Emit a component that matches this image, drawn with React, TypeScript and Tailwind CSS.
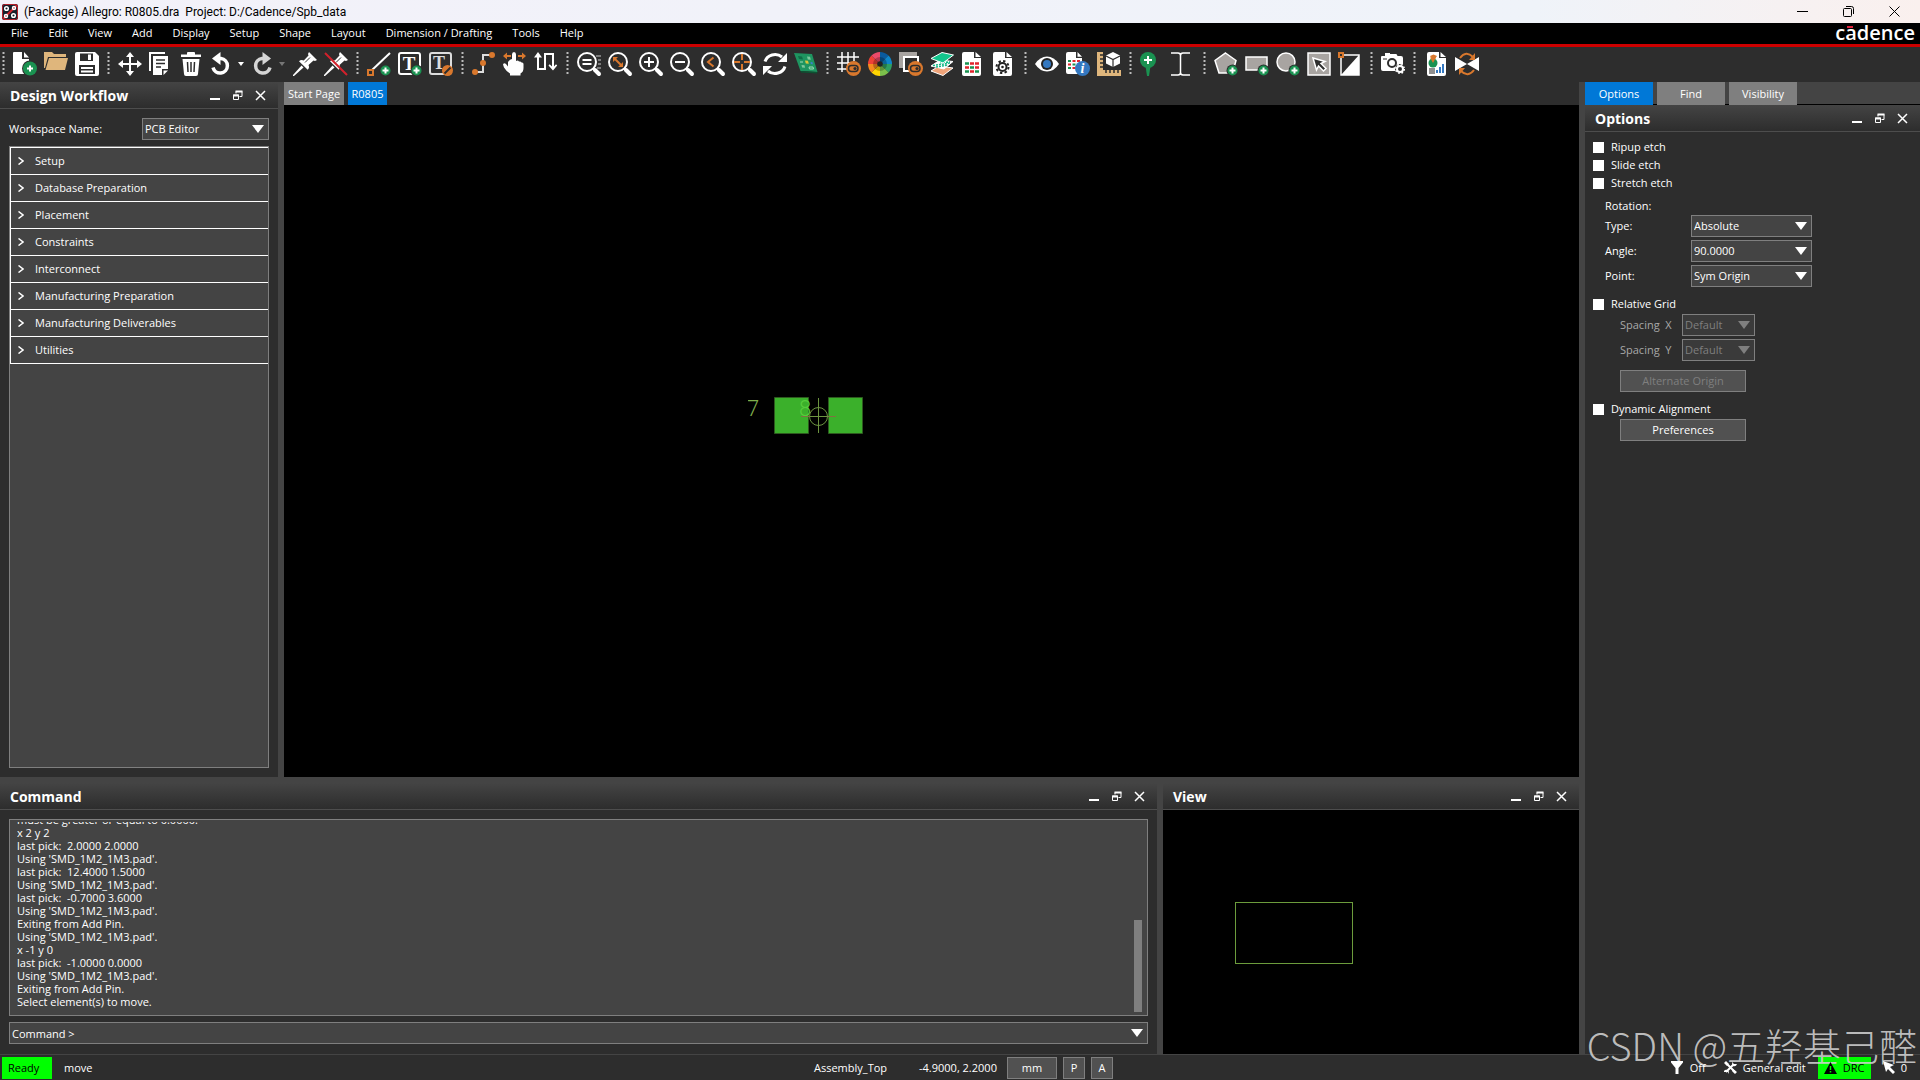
import type { ReactNode } from 'react';
import clsx from 'clsx';

const menus = ['File', 'Edit', 'View', 'Add', 'Display', 'Setup', 'Shape', 'Layout', 'Dimension / Drafting', 'Tools', 'Help'];

const workflow = [
  'Setup',
  'Database Preparation',
  'Placement',
  'Constraints',
  'Interconnect',
  'Manufacturing Preparation',
  'Manufacturing Deliverables',
  'Utilities',
];

const log = [
  'must be greater or equal to 0.0000.',
  'x 2 y 2',
  'last pick:  2.0000 2.0000',
  "Using 'SMD_1M2_1M3.pad'.",
  'last pick:  12.4000 1.5000',
  "Using 'SMD_1M2_1M3.pad'.",
  'last pick:  -0.7000 3.6000',
  "Using 'SMD_1M2_1M3.pad'.",
  'Exiting from Add Pin.',
  "Using 'SMD_1M2_1M3.pad'.",
  'x -1 y 0',
  'last pick:  -1.0000 0.0000',
  "Using 'SMD_1M2_1M3.pad'.",
  'Exiting from Add Pin.',
  'Select element(s) to move.',
];

const ORANGE = '#d9782d';
const GREEN = '#1a9251';

function Plus({ x, y, r = 5 }: { x: number; y: number; r?: number }) {
  return (
    <g>
      <circle cx={x} cy={y} r={r + 1} fill="#2d2d2d" />
      <circle cx={x} cy={y} r={r} fill={GREEN} />
      <path d={`M${x - 3} ${y}h6M${x} ${y - 3}v6`} stroke="#fff" strokeWidth="2" />
    </g>
  );
}

function Toggle({ x, y }: { x: number; y: number }) {
  return (
    <g>
      <circle cx={x} cy={y} r="7.5" fill={ORANGE} />
      <rect x={x - 5} y={y - 3} width="9.5" height="6" rx="3" fill="none" stroke="#2d2d2d" strokeWidth="1.5" />
      <circle cx={x + 1.5} cy={y} r="1.6" fill="#2d2d2d" />
    </g>
  );
}

function Lens({ children }: { children: ReactNode }) {
  return (
    <g>
      <circle cx="10" cy="10" r="9" fill="none" stroke="#fff" strokeWidth="2" />
      <path d="M16 16l2 2" stroke="#fff" strokeWidth="2.5" />
      <path d="M18 18l4 4" stroke="#fff" strokeWidth="4" strokeLinecap="round" />
      {children}
    </g>
  );
}

const wheel = ['#0a5a9d', '#0f86c9', '#2f9f62', '#7cc04b', '#ffd400', '#f58a1f', '#ee4036', '#ec4a6a'];

function Wheel() {
  const at = (i: number, r: number) => {
    const a = (i * Math.PI) / 4;
    return `${12 + r * Math.sin(a)} ${12 - r * Math.cos(a)}`;
  };
  return (
    <g>
      {wheel.map((c, i) => (
        <path key={c} d={`M12 12L${at(i, 12)}A12 12 0 0 1 ${at(i + 1, 12)}z`} fill={c} />
      ))}
      <circle cx="12" cy="12" r="7" fill="#000" opacity=".25" />
      <circle cx="12" cy="12" r="2.8" fill="#222" />
    </g>
  );
}

const pin = (
  <g fill="#fff">
    <path d="M16 0l8 8-2 1-1.500-.5-5 4.500c1 2 .5 3.500-.8 4.800L6 9.300C7.300 8 8.800 7.500 10.800 8.500l4.700-5L15 2z" />
    <path d="M8.500 13.500l2 2L1 24H0v-1z" />
    <path d="M12 10.500l5-5" stroke="#2d2d2d" strokeWidth="1" />
  </g>
);

const undo = (
  <g>
    <path d="M6 6.500h4a7.300 7.300 0 1 1-8 9" fill="none" stroke="#fff" strokeWidth="3.500" />
    <path d="M9.500 0v13L1 6.500z" fill="#fff" />
  </g>
);

const page = <path d="M1 2q0-2 2-2h10v6h7v16q0 2-2 2H3q-2 0-2-2zM14.500 0l5.500 5h-5.500z" fill="#fff" />;

const icons: Record<string, ReactNode> = {
  'New': (
    <g>
      <path d="M0 1q0-1 1-1h8v7h7v15H1q-1 0-1-1zM11 0l5 5.500h-5z" fill="#fff" />
      <Plus x={17} y={16.500} r={7} />
    </g>
  ),
  'Open': (
    <g>
      <path d="M0 0h8l2 2h12v3H4L1 16H0z" fill="#dfb67c" />
      <path d="M5 6h19l-3 12H1.500z" fill="#dfb67c" />
    </g>
  ),
  'Save': (
    <g>
      <path d="M0 2q0-2 2-2h18l4 4v18q0 2-2 2H2q-2 0-2-2z" fill="#fff" />
      <path d="M5 1.500h13V9H5zM4 13h16v9H4z" fill="#2d2d2d" />
      <path d="M13 2.500h3V8h-3zM6 15h12v2H6zM6 18.500h12v2H6z" fill="#fff" />
    </g>
  ),
  'Move': (
    <path d="M12 0l4 5h-3v6h6V8l5 4-5 4v-3h-6v6h3l-4 5-4-5h3v-6H5v3l-5-4 5-4v3h6V5H8z" fill="#fff" />
  ),
  'Copy': (
    <g>
      <path d="M0 0h16v2H2v17H0z" fill="#fff" />
      <path d="M4 4h15v13h-6v6H4z" fill="#fff" />
      <path d="M14.500 18.500H19l-4.500 4.500z" fill="#fff" />
      <path d="M7 8h9M7 11.500h9M7 15h5" stroke="#2d2d2d" strokeWidth="1.500" />
    </g>
  ),
  'Delete': (
    <g transform="translate(-1 0)">
      <path d="M2 2.500h6V1q0-1 1-1h6q1 0 1 1v1.500h6V5H2zM3.500 7h17L19 22q0 2-2 2H7q-2 0-2-2z" fill="#fff" />
      <path d="M8.500 10l.5 10M12 10v10M15.500 10l-.5 10" stroke="#2d2d2d" strokeWidth="1.500" />
    </g>
  ),
  'Undo': undo,
  'Redo': (
    <g transform="matrix(-1 0 0 1 20 0)" opacity=".8">
      {undo}
    </g>
  ),
  'Fix': pin,
  'Unfix': (
    <g>
      {pin}
      <path d="M1 1l22 22" stroke="#d3202b" strokeWidth="2" />
    </g>
  ),
  'Add Line': (
    <g>
      <path d="M4 19L23 1" stroke="#fff" strokeWidth="2" />
      <rect x="1" y="18" width="5" height="5" fill="#2d2d2d" stroke={ORANGE} strokeWidth="2" />
      <Plus x={18.500} y={18.500} />
    </g>
  ),
  'Add Text': (
    <g>
      <rect x="1" y="1" width="21" height="21" rx="2" fill="none" stroke="#fff" strokeWidth="2" />
      <text x="11" y="18" fontSize="19" textAnchor="middle" fill="#fff" fontFamily="Liberation Serif" fontWeight="700">T</text>
      <Plus x={18.500} y={18.500} />
    </g>
  ),
  'Edit Text': (
    <g>
      <rect x="1" y="1" width="21" height="21" rx="2" fill="none" stroke="#ddd" strokeWidth="2" />
      <text x="10" y="17" fontSize="18" textAnchor="middle" fill="#ddd" fontFamily="Liberation Serif" fontWeight="700">T</text>
      <circle cx="18.500" cy="18.500" r="5.500" fill={ORANGE} />
      <path d="M15.500 21.500l6-6" stroke="#2d2d2d" strokeWidth="2" />
    </g>
  ),
  'Add Connect': (
    <g>
      <path d="M3 20h8v-9M11 11V3h9" fill="none" stroke="#ddd" strokeWidth="2" />
      <circle cx="3" cy="20" r="3" fill={ORANGE} />
      <circle cx="11" cy="11" r="3" fill={ORANGE} />
      <circle cx="20" cy="3" r="3" fill={ORANGE} />
    </g>
  ),
  'Slide': (
    <g>
      <path d="M0 4l4-3.500V3h4v2H4v2.500zM23 4l-4-3.500V3h-4v2h4v2.500z" fill={ORANGE} />
      <path d="M9 2.500Q9 0 11 0t2 2.500V9q2-1 3 .5 1.800-.5 2.500 1 2-.3 2 1.500v4q0 4-3 5.500v2H7v-2Q3 19 1 15.500L0 12.500Q1 10.500 3 12l2 2.500V10q2-3 4-3z" fill="#fff" />
    </g>
  ),
  'Delay Tune': (
    <g fill="#fff">
      <path d="M3 5v13h9V3h6v14h2V1H10v15H5V5z" />
      <path d="M4 0l4 5.500H0zM19 18.500l-4.500-5 1.200-1.200L19 15.500l3-3.200 1.200 1.200z" />
    </g>
  ),
  'Zoom Points': (
    <Lens>
      <path d="M5.500 8h9M5.500 12h9" stroke="#fff" strokeWidth="2" />
      <path d="M19 4h5M21 8h3M21 12h3M20 16h4" stroke="#ccc" strokeWidth="1" />
    </Lens>
  ),
  'Zoom Fit': (
    <Lens>
      <path d="M7 7l6 6" stroke={ORANGE} strokeWidth="2" />
      <path d="M5 5h5l-5 5zM15 15h-5l5-5z" fill={ORANGE} />
    </Lens>
  ),
  'Zoom In': (
    <Lens>
      <path d="M5 10h10M10 5v10" stroke="#fff" strokeWidth="2" />
    </Lens>
  ),
  'Zoom Out': (
    <Lens>
      <path d="M5 10h10" stroke="#fff" strokeWidth="2" />
    </Lens>
  ),
  'Zoom Previous': (
    <Lens>
      <path d="M12.500 5.500L7 10l5.500 4.500" fill="none" stroke={ORANGE} strokeWidth="2" />
    </Lens>
  ),
  'Zoom Center': (
    <Lens>
      <path d="M2 10h6M12 10h6M10 2v6M10 12v6" stroke={ORANGE} strokeWidth="2" />
    </Lens>
  ),
  'Refresh': (
    <g>
      <path d="M2 9.500C4 3 13 0 19 5M22 14.500C20 21 11 24 5 19" fill="none" stroke="#fff" strokeWidth="3" />
      <path d="M24 1v9h-9zM0 23v-9h9z" fill="#fff" />
    </g>
  ),
  '3D View': (
    <g>
      <path d="M0 1l18 1 5.500 18-17-1z" fill="#1e9560" />
      <path d="M6.500 19l17 1-.5 1.500-16-1z" fill="#0d5132" />
      <path d="M4 4l4 .5 1 3-4-.5z" fill="#0f6e47" />
      <path d="M13 4.500l3 .2.8 3-3-.2zM7.500 13l3 .2.600 2.600-3-.2z" fill="#7cc99c" />
      <path d="M11 8.500l3 .2.8 3-3-.2z" fill="#d8c53a" />
      <path d="M16.500 10l2 .2.400 2-2-.2z" fill="#3f7fd0" />
      <path d="M15 15h4l.5 2h-4zM6 10h3" stroke="#9fdcb8" fill="none" />
    </g>
  ),
  'Grid Toggle': (
    <g>
      <path d="M5 0v20M11 0v20M17 0v9M0 5h22M0 11h13M0 17h10" stroke="#fff" strokeWidth="1.500" />
      <Toggle x={16.500} y={16.500} />
    </g>
  ),
  'Color': <Wheel />,
  'Shadow Toggle': (
    <g>
      <path d="M0 0h18v4H4v12H0z" fill="#a8a4a1" />
      <path d="M5 5h14v5M5 4v15h5" fill="none" stroke="#fff" strokeWidth="2" />
      <Toggle x={16.500} y={16.500} />
    </g>
  ),
  'Cross Section': (
    <g stroke="#fff" strokeWidth="1" strokeLinejoin="round">
      <path d="M1 19l8-5 14 2-10 7.500z" fill="#f0a47a" />
      <path d="M1 14l9-6 13 1.500-9 7.500z" fill="#fff" />
      <path d="M3 13.500l17-2.500M6 15l12-2M10 10.500l10-.5" stroke="#12b886" strokeWidth="1.500" strokeDasharray="2 1" />
      <path d="M1 6.500L12 .5 23.500 3 13 11z" fill="#13c58c" />
    </g>
  ),
  'Constraints': (
    <g>
      {page}
      <path d="M4 11.500h4M4 19.500h4M9 15.500h4" stroke={GREEN} strokeWidth="2.500" />
      <path d="M9 11.500h4M14 11.500h4M4 15.500h4M14 15.500h4M9 19.500h4" stroke="#e0252c" strokeWidth="2.500" />
      <path d="M14 19.500h4" stroke={GREEN} strokeWidth="2.500" />
    </g>
  ),
  'Parameters': (
    <g>
      {page}
      <circle cx="10.500" cy="15" r="4" fill="none" stroke="#222" strokeWidth="2" />
      <circle cx="10.500" cy="15" r="1.300" fill="#222" />
      <circle cx="10.500" cy="15" r="6" fill="none" stroke="#222" strokeWidth="2" strokeDasharray="2.350 2.350" />
    </g>
  ),
  'Visibility': (
    <g>
      <path d="M0 12q5-7.500 12-7.500T24 12q-5 7.500-12 7.500T0 12z" fill="#fff" />
      <circle cx="12" cy="12" r="6" fill="#222" />
      <circle cx="12" cy="12" r="4" fill="#3478c0" />
    </g>
  ),
  'Show Element': (
    <g>
      <path d="M0 2q0-2 2-2h8v6h6v16H2q-2 0-2-2zM11.500 0l4.500 4.800h-4.500z" fill="#fff" />
      <path d="M2 9h3M6.500 12.500h3M2 16h3" stroke={GREEN} strokeWidth="2" />
      <path d="M6.500 9h3M2 12.500h3M6.500 16h3M11 9h3" stroke="#e0252c" strokeWidth="2" />
      <circle cx="16.500" cy="16.500" r="7.500" fill="#3478c0" />
      <text x="16.500" y="21" fontSize="14" textAnchor="middle" fill="#fff" fontFamily="Liberation Serif" fontWeight="700" fontStyle="italic">i</text>
    </g>
  ),
  'Measure': (
    <g>
      <path d="M0 0h6v18h18v6H0z" fill="#dfb67c" />
      <path d="M3 3h3M3 7h3M3 11h3M3 15h3M9 18v3M13 18v3M17 18v3M21 18v3" stroke="#2d2d2d" strokeWidth="1.500" />
      <path d="M16 0l7 3.500v8L16 15l-7-3.500v-8z" fill="#fff" />
      <path d="M9 4l7 3.500L23 4M16 7.500V15" fill="none" stroke="#2d2d2d" strokeWidth="1.200" />
    </g>
  ),
  'Add Pin': (
    <g>
      <circle cx="8" cy="8" r="8" fill={GREEN} />
      <path d="M5.500 14h5L9 24H7z" fill={GREEN} />
      <path d="M4 8h8M8 4v8" stroke="#fff" strokeWidth="2" />
    </g>
  ),
  'Text Cursor': (
    <g fill="none" stroke="#fff">
      <path d="M0 1h7q2.500 0 2.500 2.500v17q0 2.500-2.500 2.500H0M19 1h-7q-2.500 0-2.500 2.500v17q0 2.500 2.500 2.500h7" strokeWidth="1.500" />
    </g>
  ),
  'Add Polygon': (
    <g>
      <path d="M11.500 1L22 8.500 18.500 21H5L1 8.500z" fill="#a8a4a1" stroke="#fff" strokeWidth="1.500" />
      <Plus x={18.500} y={18.500} />
    </g>
  ),
  'Add Rectangle': (
    <g>
      <rect x="1" y="5" width="21" height="13" fill="#a8a4a1" stroke="#fff" strokeWidth="1.500" />
      <Plus x={18.500} y={18.500} />
    </g>
  ),
  'Add Circle': (
    <g>
      <circle cx="10" cy="10" r="9" fill="#a8a4a1" stroke="#fff" strokeWidth="1.500" />
      <Plus x={18.500} y={18.500} />
    </g>
  ),
  'Select Shape': (
    <g>
      <rect x="1" y="1" width="22" height="22" fill="#a8a4a1" stroke="#fff" strokeWidth="1.500" />
      <path d="M6 6l12 3.500-4 2 5 5-2.500 2.500-5-5-2 4z" fill="#2d2d2d" stroke="#fff" strokeWidth="1.500" />
    </g>
  ),
  'Void Shape': (
    <g>
      <rect x="3" y="3" width="18" height="20" fill="none" stroke="#fff" strokeWidth="1.500" />
      <path d="M21 3v20H3z" fill="#fff" />
      <rect x="1" y="1" width="4" height="4" fill="#2d2d2d" stroke={ORANGE} strokeWidth="2" />
    </g>
  ),
  'Snapshot': (
    <g>
      <path d="M1 4h3V1h5v1h6q1 0 1.500 2H20q2 0 2 2v13H2q-2 0-2-2V5q0-1 1-1z" fill="#fff" />
      <path d="M2 7h4" stroke="#2d2d2d" />
      <circle cx="11" cy="11" r="4" fill="none" stroke="#2d2d2d" strokeWidth="2" />
      <circle cx="19" cy="17" r="5" fill="#2d2d2d" />
      <circle cx="19" cy="17" r="3" fill="none" stroke="#fff" strokeWidth="2" />
      <circle cx="19" cy="17" r="4.300" fill="none" stroke="#fff" strokeWidth="1.500" strokeDasharray="1.700 1.700" />
    </g>
  ),
  'Reports': (
    <g transform="translate(2 0)">
      {page}
      <path d="M4 4l3.500-1.500L11 4 7.500 9z" fill={ORANGE} />
      <circle cx="7" cy="11" r="4.500" fill={GREEN} />
      <path d="M7 11L4 5.500h6z" fill={ORANGE} />
      <rect x="3" y="16" width="6" height="6" fill="#8f8f8f" />
      <path d="M11 21v-3M14 21v-6M17 21v-9" stroke="#3478c0" strokeWidth="2" />
    </g>
  ),
  'Flip Design': (
    <g>
      <path d="M0 5l12 7-12 7zM24 5l-12 7 12 7z" fill="#fff" />
      <path d="M5 6q6-8 13-1M19 18q-6 8-13 1" fill="none" stroke={ORANGE} strokeWidth="2" />
      <path d="M20 1v7h-6zM4 23v-7h6z" fill={ORANGE} />
    </g>
  ),
};

const toolGroups = [
  ['New', 'Open', 'Save'],
  ['Move', 'Copy', 'Delete', 'Undo', 'Redo', 'Fix', 'Unfix'],
  ['Add Line', 'Add Text', 'Edit Text'],
  ['Add Connect', 'Slide', 'Delay Tune'],
  ['Zoom Points', 'Zoom Fit', 'Zoom In', 'Zoom Out', 'Zoom Previous', 'Zoom Center', 'Refresh', '3D View'],
  ['Grid Toggle', 'Color', 'Shadow Toggle', 'Cross Section', 'Constraints', 'Parameters'],
  ['Visibility', 'Show Element', 'Measure'],
  ['Add Pin', 'Text Cursor'],
  ['Add Polygon', 'Add Rectangle', 'Add Circle', 'Select Shape', 'Void Shape'],
  ['Snapshot'],
  ['Reports', 'Flip Design'],
];

function Tool({ name }: { name: string }) {
  const hasMenu = name === 'Undo' || name === 'Redo';
  return (
    <button type="button" aria-label={name} className="flex items-center">
      <svg viewBox="0 0 24 24" className="h-6 w-6 overflow-visible">
        {icons[name]}
      </svg>
      {hasMenu && (
        <svg viewBox="0 0 10 6" className="h-[6px] w-[10px]">
          <path d="M3 1h6L6 5z" fill={name === 'Undo' ? '#fff' : '#777'} />
        </svg>
      )}
    </button>
  );
}

function Toolbar() {
  return (
    <div className="flex h-[35px] shrink-0 items-start bg-[#2d2d2d] pt-[5px] pl-[2px]">
      {toolGroups.map((group, i) => (
        <div key={group[0]} className="flex items-center">
          <svg viewBox="0 0 3 24" className={clsx('h-6 w-[3px]', i === 0 ? 'mr-2' : 'mx-2')}>
            <path d="M1.500 0v24" stroke="#bbb" strokeWidth="2" strokeDasharray="2 2" />
          </svg>
          <div className="flex gap-[7px]">
            {group.map((name) => (
              <Tool key={name} name={name} />
            ))}
          </div>
        </div>
      ))}
    </div>
  );
}

function PanelHeader({ title }: { title: string }) {
  return (
    <div className="flex h-[27px] shrink-0 items-center justify-between border-b border-[#4d4d4d] bg-linear-to-b from-[#444] to-[#2d2d2d] pr-3 pl-[10px]">
      <h2 className="pt-[2px] text-[14px] leading-5 font-bold">{title}</h2>
      <div className="flex items-center gap-3">
        <button type="button" aria-label={`Minimize ${title}`}>
          <svg viewBox="0 0 11 11" className="h-[11px] w-[11px]">
            <path d="M1 9h10" stroke="#fff" strokeWidth="2" />
          </svg>
        </button>
        <button type="button" aria-label={`Float ${title}`}>
          <svg viewBox="0 0 11 11" className="h-[11px] w-[11px]">
            <path d="M4 3.500V1.500h6v5H7.500M1.500 5h5v4.500h-5z" fill="none" stroke="#fff" />
            <path d="M3.500 1.500h7M1 5.500h6" stroke="#fff" strokeWidth="2" />
          </svg>
        </button>
        <button type="button" aria-label={`Close ${title}`}>
          <svg viewBox="0 0 11 11" className="h-[11px] w-[11px]">
            <path d="M1 1l9 9M10 1l-9 9" stroke="#fff" strokeWidth="1.500" />
          </svg>
        </button>
      </div>
    </div>
  );
}

type ComboProps = { id: string; value: string; className: string; disabled?: boolean };

function Combo({ id, value, className, disabled }: ComboProps) {
  return (
    <div className={clsx('relative', className)}>
      <select
        id={id}
        disabled={disabled}
        className={clsx(
          'h-[22px] w-full appearance-none border border-[#7f7f7f] px-[2px]',
          disabled ? 'bg-[#3a3a3a] text-[#7f7f7f]' : 'bg-[#444]',
        )}
      >
        <option>{value}</option>
      </select>
      <svg viewBox="0 0 12 8" className="pointer-events-none absolute top-[7px] right-[5px] h-2 w-3">
        <path d="M0 0h12L6 8z" fill={disabled ? '#7f7f7f' : '#fff'} />
      </svg>
    </div>
  );
}

function Check({ id, label }: { id: string; label: string }) {
  return (
    <div className="flex h-[18px] items-center gap-[7px] pl-2">
      <input id={id} type="checkbox" className="h-[11px] w-[11px] appearance-none bg-white" />
      <label htmlFor={id}>{label}</label>
    </div>
  );
}

function DesignWorkflow() {
  return (
    <section className="flex w-[278px] shrink-0 flex-col bg-[#2d2d2d]">
      <PanelHeader title="Design Workflow" />
      <div className="flex flex-1 flex-col px-[9px] pt-[9px] pb-[9px]">
        <div className="mb-[6px] flex items-center justify-between">
          <label htmlFor="workspace">Workspace Name:</label>
          <Combo id="workspace" value="PCB Editor" className="w-[127px]" />
        </div>
        <div className="flex-1 border border-[#7f7f7f] bg-[#444]">
          <ul className="border-b border-l border-white">
            {workflow.map((w) => (
              <li key={w} className="border-t border-white">
                <button type="button" className="flex h-[26px] w-full items-center gap-[11px] pl-[7px]">
                  <svg viewBox="0 0 6 8" className="h-2 w-[6px]">
                    <path d="M.5 .5L5 4 .5 7.500" fill="none" stroke="#fff" strokeWidth="1.500" />
                  </svg>
                  {w}
                </button>
              </li>
            ))}
          </ul>
        </div>
      </div>
    </section>
  );
}

function Canvas() {
  return (
    <section className="flex min-w-0 flex-1 flex-col">
      <div className="flex h-[23px] shrink-0 gap-1 bg-[#2d2d2d] text-white">
        <button type="button" className="w-[60px] bg-[#7f7f7f] text-center">Start Page</button>
        <button type="button" className="w-[39px] bg-[#0078d7] text-center">R0805</button>
      </div>
      <div className="relative flex-1 bg-black">
        <svg viewBox="0 0 116 40" className="absolute top-[291px] left-[464px] h-10 w-[116px]" fill="none">
          <path d="M26.500 1.500h34v36h-34zM80.500 1.500h34v36h-34z" fill="#3bb02b" stroke="#2d5a1e" />
          <text x="-1" y="20" fontSize="22" fill="#7fae4c" fontFamily="Roboto" fontWeight="300">7</text>
          <text x="51" y="20" fontSize="22" fill="#56cc3c" fontFamily="Roboto" fontWeight="300">8</text>
          <circle cx="70.500" cy="20.500" r="9" stroke="#6c9440" />
          <path d="M70.500 2v35M62 20.500h18" stroke="#6c9440" />
          <path d="M53 20.500h9M80 20.500h8" stroke="#7d7440" />
        </svg>
      </div>
    </section>
  );
}

function Command() {
  return (
    <section className="flex min-w-0 flex-1 flex-col bg-[#2d2d2d]">
      <PanelHeader title="Command" />
      <div className="flex min-h-0 flex-1 flex-col gap-[6px] p-[9px] pb-[10px]">
        <div className="flex min-h-0 flex-1 items-end justify-between border border-[#7f7f7f] bg-[#444] pt-[2px] pr-[5px] pb-[3px] pl-[7px]">
          <div className="flex h-full flex-col justify-end overflow-hidden pb-1 whitespace-pre">
            {log.map((line, i) => (
              <p key={i} className="h-[13px] leading-[13px]">{line}</p>
            ))}
          </div>
          <div className="h-[92px] w-2 bg-[#7f7f7f]" />
        </div>
        <div className="relative">
          <input
            aria-label="Command"
            defaultValue="Command &gt;"
            className="h-[22px] w-full border border-[#7f7f7f] bg-[#444] px-[2px]"
          />
          <svg viewBox="0 0 12 8" className="pointer-events-none absolute top-[7px] right-[5px] h-2 w-3">
            <path d="M0 0h12L6 8z" fill="#fff" />
          </svg>
        </div>
      </div>
    </section>
  );
}

function WorldView() {
  return (
    <section className="flex w-[416px] shrink-0 flex-col">
      <PanelHeader title="View" />
      <div className="relative flex-1 bg-black">
        <div className="absolute top-[92px] left-[72px] h-[62px] w-[118px] border border-[#6c9c3c]" />
      </div>
    </section>
  );
}

const rotation = [
  ['Type', 'Absolute'],
  ['Angle', '90.0000'],
  ['Point', 'Sym Origin'],
];

function Options() {
  return (
    <aside className="flex w-[335px] shrink-0 flex-col bg-[#2d2d2d]">
      <div className="flex h-[23px] shrink-0 gap-1 border-b border-black bg-[#444] text-white">
        {['Options', 'Find', 'Visibility'].map((t, i) => (
          <button key={t} type="button" className={clsx('h-[23px] w-[68px]', i === 0 ? 'bg-[#0078d7]' : 'bg-[#7f7f7f]')}>
            {t}
          </button>
        ))}
      </div>
      <PanelHeader title="Options" />
      <div className="pt-[6px]">
        <Check id="ripup" label="Ripup etch" />
        <Check id="slide" label="Slide etch" />
        <Check id="stretch" label="Stretch etch" />
        <fieldset className="mt-[5px] flex flex-col gap-[3px] pl-5">
          <legend className="h-[18px] leading-[18px]">Rotation:</legend>
          {rotation.map(([label, value]) => (
            <div key={label} className="flex items-center">
              <label htmlFor={label} className="w-[86px]">{label}:</label>
              <Combo id={label} value={value} className="w-[121px]" />
            </div>
          ))}
        </fieldset>
        <div className="mt-2">
          <Check id="relative" label="Relative Grid" />
        </div>
        <div className="mt-[1px] flex flex-col gap-[3px] pl-[35px] text-[#a8a8a8]">
          {['X', 'Y'].map((axis) => (
            <div key={axis} className="flex items-center">
              <label htmlFor={axis} className="w-[62px] whitespace-pre">{`Spacing  ${axis}`}</label>
              <Combo id={axis} value="Default" className="w-[73px]" disabled />
            </div>
          ))}
        </div>
        <button type="button" disabled className="mt-[9px] ml-[35px] block h-[22px] w-[126px] border border-[#7f7f7f] bg-[#515151] text-[#7f7f7f]">
          Alternate Origin
        </button>
        <div className="mt-2">
          <Check id="dynamic" label="Dynamic Alignment" />
        </div>
        <button type="button" className="mt-px ml-[35px] block h-[22px] w-[126px] border border-[#7f7f7f] bg-[#515151]">
          Preferences
        </button>
      </div>
    </aside>
  );
}

const statusButton = 'h-[22px] border border-[#7f7f7f] bg-[#515151]';

function StatusBar() {
  return (
    <footer className="relative flex h-[26px] shrink-0 items-center border-t border-[#444] bg-[#2d2d2d] pl-[2px]">
      <div className="flex h-[22px] w-[50px] items-center bg-[#00ff00] pl-[6px] text-black">Ready</div>
      <div className="ml-3 w-[750px]">move</div>
      <div className="w-[105px]">Assembly_Top</div>
      <div className="w-[88px]">-4.9000, 2.2000</div>
      <div className="flex gap-[6px]">
        <button type="button" className={clsx(statusButton, 'w-[50px]')}>mm</button>
        <button type="button" className={clsx(statusButton, 'w-[22px]')}>P</button>
        <button type="button" className={clsx(statusButton, 'w-[22px]')}>A</button>
      </div>
      <div className="ml-auto flex items-center pr-[13px]">
        <svg viewBox="0 0 12 13" className="mr-[7px] h-[13px] w-3">
          <path d="M0 0h12v1.500L7.500 7v6h-3V7L0 1.500z" fill="#fff" />
        </svg>
        <span className="relative z-10 w-[34px]">Off</span>
        <svg viewBox="0 0 13 13" className="mr-[6px] h-[13px] w-[13px]">
          <path d="M3 3l8 8M10 3l-8 8" stroke="#fff" strokeWidth="2" />
          <path d="M0 2l2-2 3 3-2 2zM9 0v3h4q-1 3-4 2L8 3zM0 10q1-2 4-1l1 2-1 2v-2H0zM9 8l4 3-2 2-3-3z" fill="#fff" />
        </svg>
        <span className="relative z-10">General edit</span>
        <span className="ml-3 flex h-[22px] w-[53px] items-center gap-[6px] bg-[#00ff00] pl-[6px] text-black">
          <svg viewBox="0 0 13 12" className="relative z-10 h-3 w-[13px]">
            <path d="M6.500 0L13 12H0z" fill="#000" />
            <path d="M6.500 4v4M6.500 9v1.500" stroke="#0f0" strokeWidth="1.500" />
          </svg>
          <span className="relative z-10">DRC</span>
        </span>
        <svg viewBox="0 0 12 13" className="relative z-10 mr-[6px] ml-3 h-[13px] w-3">
          <path d="M0 0l11 4-4 2 5 5-2 2-5-5-2 3z" fill="#fff" />
        </svg>
        <span className="relative z-10">0</span>
      </div>
      <div className="pointer-events-none absolute right-[3px] bottom-[13px] font-['Noto_Sans_CJK_SC',sans-serif] text-[38px] leading-[44px] font-light whitespace-nowrap text-[#d0d0d0]/90">
        CSDN @五羟基己醛
      </div>
    </footer>
  );
}

function TitleBar() {
  return (
    <header className="flex h-[23px] shrink-0 items-center justify-between bg-linear-to-r from-[#f3f1f9] via-[#eff3f9] via-80% to-[#faf0ee] pr-5 pl-[2px] text-black">
      <div className="flex items-center gap-[6px] font-['Roboto',sans-serif] text-[12px]">
        <svg viewBox="0 0 16 16" className="h-4 w-4">
          <rect width="16" height="16" rx="2" fill="#16202c" />
          <path d="M1 15L15 1" stroke="#d3202b" strokeWidth="2" />
          <rect x=".5" y=".5" width="15" height="15" rx="2" fill="none" stroke="#b3202b" />
          <g fill="none" stroke="#fff" strokeWidth="1.500">
            <circle cx="4.500" cy="4.500" r="1.800" />
            <circle cx="12" cy="4" r="1.500" />
            <circle cx="4" cy="12" r="1.500" />
            <circle cx="11.500" cy="11.500" r="1.800" />
          </g>
        </svg>
        <h1 className="whitespace-pre">{'(Package) Allegro: R0805.dra  Project: D:/Cadence/Spb_data'}</h1>
      </div>
      <div className="flex items-center gap-[35px]">
        <button type="button" aria-label="Minimize">
          <svg viewBox="0 0 11 11" className="h-[11px] w-[11px]">
            <path d="M0 5.500h11" stroke="#000" />
          </svg>
        </button>
        <button type="button" aria-label="Restore">
          <svg viewBox="0 0 11 11" className="h-[11px] w-[11px]" fill="none" stroke="#000">
            <rect x=".5" y="2.500" width="8" height="8" rx="1" />
            <path d="M3 .5h5.500q2 0 2 2V8" />
          </svg>
        </button>
        <button type="button" aria-label="Close">
          <svg viewBox="0 0 11 11" className="h-[11px] w-[11px]">
            <path d="M.5 .5l10 10M10.500 .5l-10 10" stroke="#000" />
          </svg>
        </button>
      </div>
    </header>
  );
}

function MenuBar() {
  return (
    <nav className="flex h-6 shrink-0 items-center justify-between border-b-3 border-[#cc0000] bg-black pr-[5px] pb-[2px] pl-[11px]">
      <div className="flex gap-5">
        {menus.map((m) => (
          <button key={m} type="button">{m}</button>
        ))}
      </div>
      <div className="relative text-[20px] leading-5 font-semibold">
        cadence
        <span className="absolute top-[3px] left-3 h-[2px] w-[6px] bg-[#e0203a]" />
      </div>
    </nav>
  );
}

export default function App() {
  return (
    <div className="flex h-screen w-full flex-col overflow-hidden bg-[#2d2d2d] font-['Open_Sans',sans-serif] text-[11px] leading-4 text-white">
      <TitleBar />
      <MenuBar />
      <Toolbar />
      <main className="flex min-h-0 flex-1">
        <div className="flex min-w-0 flex-1 flex-col">
          <div className="flex min-h-0 flex-1">
            <DesignWorkflow />
            <div className="w-[6px] shrink-0 bg-[#444]" />
            <Canvas />
          </div>
          <div className="h-[6px] shrink-0 bg-[#444]" />
          <div className="flex h-[271px] shrink-0">
            <Command />
            <div className="w-[6px] shrink-0 bg-[#444]" />
            <WorldView />
          </div>
        </div>
        <div className="w-[6px] shrink-0 bg-[#444]" />
        <Options />
      </main>
      <StatusBar />
    </div>
  );
}
